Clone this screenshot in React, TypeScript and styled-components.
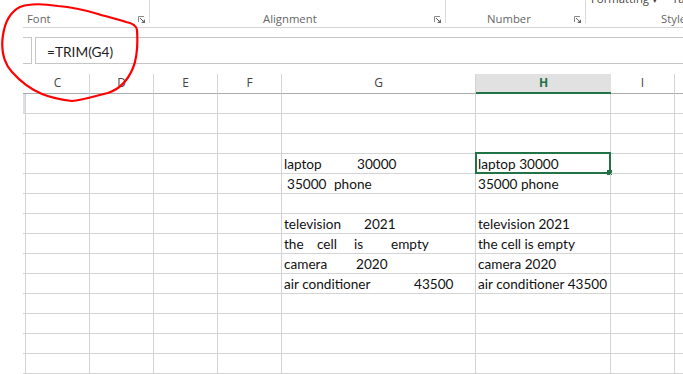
import React from 'react';
import styled, { createGlobalStyle } from 'styled-components';

const Global = createGlobalStyle`
  html, body { margin: 0; padding: 0; background: #fff; }
  body { width: 683px; height: 374px; overflow: hidden; }
`;

const UI_FONT = `"Open Sans", "Noto Sans", sans-serif`;
const CELL_FONT = `Lato, "Open Sans", sans-serif`;
const GRID = '#d4d4d4';

const Page = styled.div`
  position: relative;
  width: 683px;
  height: 374px;
  overflow: hidden;
  background: #fff;
  display: flex;
  flex-direction: column;
  font-family: ${UI_FONT};
`;

/* ---------- Ribbon ---------- */
const Ribbon = styled.div`
  display: flex;
  flex-shrink: 0;
  height: 27px;
  margin-left: 23px;
  border-bottom: 1px solid #d5d5d5;
`;

const Group = styled.div<{ $w?: number }>`
  ${(p) => (p.$w ? `width: ${p.$w}px; flex-shrink: 0;` : 'flex: 1; min-width: 0;')}
  display: flex;
  flex-direction: column;
  justify-content: flex-end;
  padding-bottom: 2px;
  box-sizing: border-box;
`;

const Controls = styled.div`
  flex: 1;
  overflow: hidden;
  display: flex;
  padding-left: 5px;
`;

const ControlText = styled.span<{ $ml?: number }>`
  margin-top: -8px;
  margin-left: ${(p) => p.$ml ?? 0}px;
  font-size: 11.3px;
  line-height: 14px;
  color: #444;
  white-space: nowrap;
`;

const Sep = styled.div`
  width: 1px;
  height: 23px;
  background: #dadada;
  flex-shrink: 0;
`;

const LabelRow = styled.div<{ $pad: number }>`
  display: flex;
  height: 14px;
  padding-left: ${(p) => p.$pad}px;
  padding-right: 4px;
`;

const Label = styled.span`
  flex: 1;
  font-size: 11.3px;
  line-height: 15px;
  color: #666;
  white-space: nowrap;
`;

const Launcher = styled.svg`
  align-self: flex-end;
  margin-bottom: 2px;
  flex-shrink: 0;
`;

const LauncherIcon = () => (
  <Launcher width="7" height="7" viewBox="0 0 7 7">
    <path d="M0.5 6V0.5H6" stroke="#8a8a8a" strokeWidth="1" fill="none" />
    <path d="M2 2L5 5" stroke="#666" strokeWidth="1" />
    <path d="M7 3.2V7H3.2Z" fill="#666" />
  </Launcher>
);

/* ---------- Formula bar ---------- */
const FormulaRow = styled.div`
  display: flex;
  flex-shrink: 0;
  height: 27px;
  margin-top: 9px;
`;

const NameBox = styled.div`
  width: 9px;
  margin-left: 23px;
  box-sizing: border-box;
  border: 1px solid #c6c6c6;
  border-left: none;
`;

const FormulaInput = styled.div`
  flex: 1;
  margin-left: 3px;
  box-sizing: border-box;
  border: 1px solid #c6c6c6;
  border-right: none;
  display: flex;
  align-items: center;
  padding: 1px 0 0 11px;
  font-family: ${CELL_FONT};
  font-size: 13.7px;
  line-height: 17px;
  color: #1e1e1e;
`;

/* ---------- Sheet ---------- */
const Sheet = styled.div`
  display: grid;
  grid-template-columns: 23px 3px 64px 64px 64px 64px 194px 135px 64px 1fr;
  grid-auto-rows: 20px;
  margin-top: 10px;
`;

const Blank = styled.div``;

const Corner = styled.div`
  box-sizing: border-box;
  border-bottom: 1px solid #ababab;
`;

const RowHead = styled.div<{ $active?: boolean }>`
  box-sizing: border-box;
  border-right: 1px solid ${GRID};
  border-bottom: 1px solid ${GRID};
  background: ${(p) => (p.$active ? '#dde0e5' : '#fff')};
`;

const ColHead = styled.div<{ $active?: boolean; $last?: boolean }>`
  box-sizing: border-box;
  display: flex;
  align-items: center;
  justify-content: center;
  padding-bottom: ${(p) => (p.$active ? 1 : 2)}px;
  font-family: ${UI_FONT};
  font-size: 12px;
  color: ${(p) => (p.$active ? '#217346' : '#444')};
  font-weight: ${(p) => (p.$active ? 700 : 400)};
  background: ${(p) => (p.$active ? '#e1e1e1' : '#fff')};
  border-right: ${(p) => (p.$last || p.$active ? 'none' : `1px solid ${GRID}`)};
  border-bottom: ${(p) => (p.$active ? '2px solid #217346' : '1px solid #ababab')};
`;

const Cell = styled.div<{ $last?: boolean }>`
  position: relative;
  box-sizing: border-box;
  display: flex;
  align-items: flex-end;
  padding: 0 2px 0 2px;
  border-right: ${(p) => (p.$last ? 'none' : `1px solid ${GRID}`)};
  border-bottom: 1px solid ${GRID};
  font-family: ${CELL_FONT};
  font-size: 13.6px;
  line-height: 17px;
  color: #111;
  white-space: pre;
`;

const Seg = styled.span<{ $w?: number; $ml?: number }>`
  display: inline-block;
  flex-shrink: 0;
  ${(p) => (p.$w != null ? `width: ${p.$w}px;` : '')}
  margin-left: ${(p) => p.$ml ?? 0}px;
`;

const Selection = styled.div`
  position: absolute;
  top: -2px;
  left: -1px;
  right: -1px;
  bottom: -1px;
  border: 2px solid #217346;
  pointer-events: none;
`;

const Handle = styled.div`
  position: absolute;
  right: -3px;
  bottom: -3px;
  width: 5px;
  height: 5px;
  background: #217346;
`;

const Annotation = styled.svg`
  position: absolute;
  left: 0;
  top: 0;
  pointer-events: none;
`;

/* ---------- data ---------- */
type Part = [string, number];
type RowData = { g?: Part[]; h?: string };

const rows: RowData[] = [
  {},
  {},
  {},
  { g: [['laptop', 0], ['30000', 73]], h: 'laptop 30000' },
  { g: [['35000', 3], ['phone', 50]], h: '35000 phone' },
  {},
  { g: [['television', 0], ['2021', 80]], h: 'television 2021' },
  { g: [['the', 0], ['cell', 33], ['is', 70], ['empty', 107]], h: 'the cell is empty' },
  { g: [['camera', 0], ['2020', 72]], h: 'camera 2020' },
  { g: [['air conditioner', 0], ['43500', 130]], h: 'air conditioner 43500' },
  {},
  {},
  {},
  {},
  {},
];

const columns = ['C', 'D', 'E', 'F', 'G', 'H', 'I', ''];

const Spread = ({ parts }: { parts: Part[] }) => (
  <>
    {parts.map(([text, at], i) => {
      const next = parts[i + 1];
      return (
        <Seg key={i} $ml={i === 0 ? at : 0} $w={next ? next[1] - at : undefined}>
          {text}
        </Seg>
      );
    })}
  </>
);

export default function App() {
  return (
    <Page>
      <Global />
      <Ribbon>
        <Group $w={126}>
          <LabelRow $pad={4}>
            <Label>Font</Label>
            <LauncherIcon />
          </LabelRow>
        </Group>
        <Sep />
        <Group $w={295}>
          <LabelRow $pad={113}>
            <Label>Alignment</Label>
            <LauncherIcon />
          </LabelRow>
        </Group>
        <Sep />
        <Group $w={139}>
          <LabelRow $pad={41}>
            <Label>Number</Label>
            <LauncherIcon />
          </LabelRow>
        </Group>
        <Sep />
        <Group>
          <Controls>
            <ControlText>Formatting</ControlText>
            <ControlText $ml={3}>▾</ControlText>
            <ControlText $ml={14}>Table</ControlText>
          </Controls>
          <LabelRow $pad={75}>
            <Label>Styles</Label>
          </LabelRow>
        </Group>
      </Ribbon>

      <FormulaRow>
        <NameBox />
        <FormulaInput>=TRIM(G4)</FormulaInput>
      </FormulaRow>

      <Sheet>
        <Blank />
        <Corner />
        {columns.map((c, i) => (
          <ColHead key={c + i} $active={c === 'H'} $last={i === columns.length - 1}>
            {c}
          </ColHead>
        ))}
        {rows.map((r, ri) => (
          <React.Fragment key={ri}>
            <Blank />
            <RowHead $active={ri === 0} />
            <Cell />
            <Cell />
            <Cell />
            <Cell />
            <Cell>{r.g && <Spread parts={r.g} />}</Cell>
            <Cell>
              {r.h}
              {ri === 3 && (
                <Selection>
                  <Handle />
                </Selection>
              )}
            </Cell>
            <Cell />
            <Cell $last />
          </React.Fragment>
        ))}
      </Sheet>

      <Annotation width="150" height="110" viewBox="0 0 150 110">
        <path
          d="M137 30 C136 25, 132 23, 126 22 C118 19, 108 17, 98 14 C85 10, 72 7, 58 6 C45 4, 30 3, 20 7 C10 12, 5 22, 3 35 C1 48, 3 62, 12 72 C20 81, 30 89, 42 94 C52 98, 62 100, 72 101 C82 100, 95 96, 108 93 C120 89, 128 80, 133 68 C137 58, 138 45, 137 30"
          fill="none"
          stroke="#f00"
          strokeWidth="2.2"
          strokeLinecap="round"
        />
      </Annotation>
    </Page>
  );
}
